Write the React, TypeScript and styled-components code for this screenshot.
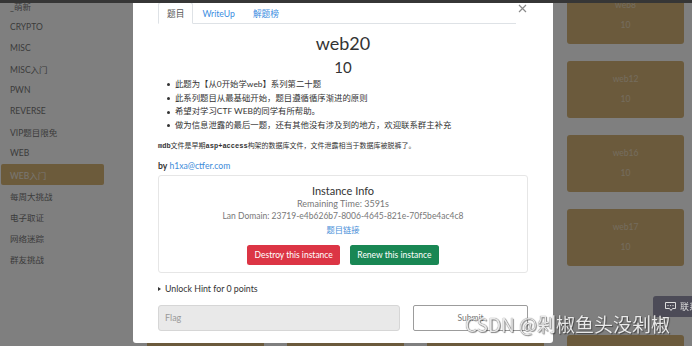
import React from "react";
import styled, { createGlobalStyle } from "styled-components";

const GlobalStyle = createGlobalStyle`
	html, body {
		margin: 0;
		padding: 0;
	}
	body {
		width: 692px;
		height: 346px;
		overflow: hidden;
		background: #fff;
		font-family: Lato, "Noto Sans CJK SC", sans-serif;
	}
`;

const Page = styled.div`
	width: 692px;
	height: 346px;
	overflow: hidden;
	display: flex;
	flex-direction: column;
`;

const TopBar = styled.div`
	height: 3px;
	flex-shrink: 0;
	background: #363636;
	position: relative;
	z-index: 1;
`;

const Layout = styled.div`
	flex: 1;
	display: flex;
`;

const Sidebar = styled.ul`
	list-style: none;
	margin: -7.3px 0 0;
	padding: 0 0 0 1px;
	width: 132px;
	flex-shrink: 0;
`;

const SideItem = styled.li<{ $active?: boolean }>`
	width: 103px;
	height: 20.1px;
	margin-bottom: 1px;
	box-sizing: border-box;
	padding-left: 9px;
	display: flex;
	align-items: center;
	font-size: 8.5px;
	border-radius: 2px;
	color: ${(p) => (p.$active ? "#f3ede2" : "#777")};
	background: ${(p) => (p.$active ? "#d8b676" : "transparent")};
`;

const Main = styled.div`
	flex: 1;
	display: flex;
	flex-direction: column;
	margin-top: -15.7px;
	padding-right: 8px;
`;

const CardGrid = styled.div<{ $gapTop?: number }>`
	display: grid;
	grid-template-columns: repeat(4, 117px);
	column-gap: 23px;
	row-gap: 17px;
	justify-content: end;
	margin-top: ${(p) => p.$gapTop ?? 0}px;
`;

const Card = styled.div`
	height: 57px;
	border-radius: 3px;
	background: #d6b478;
	display: flex;
	flex-direction: column;
	align-items: center;
	justify-content: center;
	gap: 9px;
	font-size: 8.5px;
	line-height: 11px;
	color: rgba(255, 255, 255, 0.5);
`;

const Backdrop = styled.div`
	position: fixed;
	inset: 0;
	background: rgba(0, 0, 0, 0.5);
`;

const Modal = styled.div`
	position: fixed;
	top: 0;
	left: 133px;
	width: 420px;
	height: 343px;
	box-sizing: border-box;
	padding: 2px 25px 0;
	background: #fff;
	color: #333;
	border-radius: 0 0 3px 3px;
`;

const Header = styled.div`
	display: flex;
	align-items: flex-start;
`;

const Tabs = styled.div`
	flex: 1;
	display: flex;
	height: 22px;
	box-sizing: border-box;
	border-bottom: 1px solid #dee2e6;
`;

const Tab = styled.div<{ $active?: boolean }>`
	height: 22px;
	box-sizing: border-box;
	padding: 0 8px;
	display: flex;
	align-items: center;
	font-size: 8.7px;
	border: 1px solid ${(p) => (p.$active ? "#dee2e6" : "transparent")};
	border-bottom-color: ${(p) => (p.$active ? "#fff" : "transparent")};
	border-radius: 3px 3px 0 0;
	color: ${(p) => (p.$active ? "#555" : "#3b8ddf")};
	background: ${(p) => (p.$active ? "#fff" : "transparent")};
`;

const Close = styled.div`
	width: 12px;
	padding-left: 2px;
	box-sizing: border-box;
	margin-top: 2px;
	display: flex;
`;

const Title = styled.h2`
	margin: 8px 0 0;
	font-size: 18px;
	line-height: 22px;
	font-weight: 400;
	text-align: center;
	color: #333;
`;

const Points = styled.h3`
	margin: 3px 0 0;
	font-size: 15px;
	line-height: 20px;
	font-weight: 400;
	text-align: center;
	color: #333;
`;

const Bullets = styled.ul`
	list-style: none;
	margin: 1px 0 0;
	padding: 0;
`;

const Bullet = styled.li`
	display: flex;
	align-items: center;
	font-size: 8.4px;
	line-height: 13.7px;
	color: #333;

	&::before {
		content: "";
		width: 3px;
		height: 3px;
		border-radius: 50%;
		background: #333;
		margin: 0 5.5px 0 8.5px;
	}
`;

const Note = styled.p`
	margin: 7.2px 0 0;
	font-family: "Liberation Mono", "Noto Sans CJK SC", monospace;
	font-size: 7px;
	line-height: 12px;
	color: #333;

	b {
		font-weight: 700;
	}
`;

const ByLine = styled.p`
	margin: 8px 0 0;
	font-size: 8.6px;
	line-height: 12px;
	color: #333;

	b {
		font-weight: 700;
	}
`;

const Link = styled.a`
	color: #3d8bd9;
	text-decoration: none;
`;

const InstanceBox = styled.div`
	margin-top: 3px;
	border: 1px solid #e6e6e6;
	border-radius: 3px;
	padding: 7.7px 0;
	text-align: center;
`;

const InstanceTitle = styled.div`
	font-size: 11px;
	line-height: 14px;
	color: #333;
`;

const Meta = styled.div<{ $size?: number }>`
	font-size: ${(p) => p.$size ?? 8.5}px;
	line-height: 12px;
	color: #777;
`;

const TaskLink = styled.div`
	margin-top: 2.4px;
	font-size: 8.3px;
	line-height: 12px;
	color: #4a90d9;
`;

const ButtonRow = styled.div`
	margin-top: 9px;
	display: flex;
	justify-content: center;
	gap: 9.5px;
`;

const ActionButton = styled.button<{ $tone: "danger" | "success" }>`
	height: 19.6px;
	padding: 0 7.5px;
	border: none;
	border-radius: 2.5px;
	font-family: Lato, sans-serif;
	font-size: 8.5px;
	color: #fff;
	background: ${(p) => (p.$tone === "danger" ? "#dc3545" : "#198754")};
`;

const Hint = styled.div`
	margin-top: 10px;
	display: flex;
	align-items: center;
	font-size: 8.8px;
	line-height: 12px;
	color: #333;

	&::before {
		content: "";
		border-left: 3.7px solid #333;
		border-top: 2.3px solid transparent;
		border-bottom: 2.3px solid transparent;
		margin-right: 4px;
	}
`;

const FlagRow = styled.div`
	margin-top: 9.3px;
	height: 26.4px;
	display: grid;
	grid-template-columns: 1fr 115px;
	column-gap: 12.7px;
`;

const FlagInput = styled.input`
	box-sizing: border-box;
	height: 100%;
	padding: 0 6px;
	border: 1px solid #d6d6d6;
	border-radius: 3px;
	background: #e9e9e9;
	font-family: Lato, sans-serif;
	font-size: 9px;
	outline: none;

	&::placeholder {
		color: #9a9a9a;
	}
`;

const SubmitButton = styled.button`
	box-sizing: border-box;
	height: 100%;
	border: 1px solid #9c9c9c;
	border-radius: 2px;
	background: #fff;
	font-family: Lato, sans-serif;
	font-size: 8.5px;
	color: #777;
	padding-bottom: 1px;
`;

const ChatWidget = styled.div`
	position: fixed;
	top: 296px;
	left: 653px;
	width: 80px;
	height: 21px;
	box-sizing: border-box;
	padding-left: 11px;
	display: flex;
	align-items: center;
	gap: 3px;
	border-radius: 3px 0 0 3px;
	background: #4c4b57;
	color: #dcdcdc;
	font-size: 9px;
	white-space: nowrap;
	overflow: hidden;
`;

const Watermark = styled.div`
	position: fixed;
	left: 465px;
	top: 313px;
	font-family: "Noto Sans CJK SC", sans-serif;
	font-size: 19px;
	line-height: 22px;
	color: #e9e9e9;
	white-space: nowrap;
	text-shadow: 0 0 1px #444, 1px 1px 1px rgba(0, 0, 0, 0.45);
`;

const categories = [
	"_萌新",
	"CRYPTO",
	"MISC",
	"MISC入门",
	"PWN",
	"REVERSE",
	"VIP题目限免",
	"WEB",
	"WEB入门",
	"每周大挑战",
	"电子取证",
	"网络迷踪",
	"群友挑战",
];

const firstRows = [
	["web5", "web6", "web7", "web8"],
	["web9", "web10", "web11", "web12"],
	["web13", "web14", "web15", "web16"],
	["web18", "web19", "web20", "web17"],
];

const secondRows = [["web21", "web22", "web23", "web24"]];

const bullets = [
	"此题为【从0开始学web】系列第二十题",
	"此系列题目从最基础开始，题目遵循循序渐进的原则",
	"希望对学习CTF WEB的同学有所帮助。",
	"做为信息泄露的最后一题，还有其他没有涉及到的地方，欢迎联系群主补充",
];

const CloseIcon = () => (
	<svg width="9" height="9" viewBox="0 0 9 9">
		<path d="M1 1 L8 8 M8 1 L1 8" stroke="#8a8a8a" strokeWidth="1.2" />
	</svg>
);

const ChatIcon = () => (
	<svg width="13" height="11" viewBox="0 0 13 11" fill="none">
		<path
			d="M1.5 1.5 H11.5 V7.5 H8.5 L7 9.5 L5.5 7.5 H1.5 Z"
			stroke="#dcdcdc"
			strokeWidth="1"
			strokeLinejoin="round"
		/>
		<circle cx="4" cy="4.6" r="0.7" fill="#dcdcdc" />
		<circle cx="6.5" cy="4.6" r="0.7" fill="#dcdcdc" />
		<circle cx="9" cy="4.6" r="0.7" fill="#dcdcdc" />
	</svg>
);

const App = () => {
	return (
		<>
			<GlobalStyle />
			<Page>
				<TopBar />
				<Layout>
					<Sidebar>
						{categories.map((c) => (
							<SideItem key={c} $active={c === "WEB入门"}>
								{c}
							</SideItem>
						))}
					</Sidebar>
					<Main>
						<CardGrid>
							{firstRows.flat().map((name) => (
								<Card key={name}>
									<span>{name}</span>
									<span>10</span>
								</Card>
							))}
						</CardGrid>
						<CardGrid $gapTop={69}>
							{secondRows.flat().map((name) => (
								<Card key={name} />
							))}
						</CardGrid>
					</Main>
				</Layout>
			</Page>

			<Backdrop />

			<Modal>
				<Header>
					<Tabs>
						<Tab $active>题目</Tab>
						<Tab>WriteUp</Tab>
						<Tab>解题榜</Tab>
					</Tabs>
					<Close>
						<CloseIcon />
					</Close>
				</Header>

				<Title>web20</Title>
				<Points>10</Points>

				<Bullets>
					{bullets.map((b) => (
						<Bullet key={b}>{b}</Bullet>
					))}
				</Bullets>

				<Note>
					<b>mdb</b>文件是早期<b>asp+access</b>构架的数据库文件，文件泄露相当于数据库被脱裤了。
				</Note>

				<ByLine>
					<b>by</b> <Link href="#">h1xa@ctfer.com</Link>
				</ByLine>

				<InstanceBox>
					<InstanceTitle>Instance Info</InstanceTitle>
					<Meta $size={9}>Remaining Time: 3591s</Meta>
					<Meta>Lan Domain: 23719-e4b626b7-8006-4645-821e-70f5be4ac4c8</Meta>
					<TaskLink>题目链接</TaskLink>
					<ButtonRow>
						<ActionButton $tone="danger">Destroy this instance</ActionButton>
						<ActionButton $tone="success">Renew this instance</ActionButton>
					</ButtonRow>
				</InstanceBox>

				<Hint>Unlock Hint for 0 points</Hint>

				<FlagRow>
					<FlagInput placeholder="Flag" />
					<SubmitButton>Submit</SubmitButton>
				</FlagRow>
			</Modal>

			<ChatWidget>
				<ChatIcon />
				<span>联系我们</span>
			</ChatWidget>

			<Watermark>CSDN @剁椒鱼头没剁椒</Watermark>
		</>
	);
};

export default App;
